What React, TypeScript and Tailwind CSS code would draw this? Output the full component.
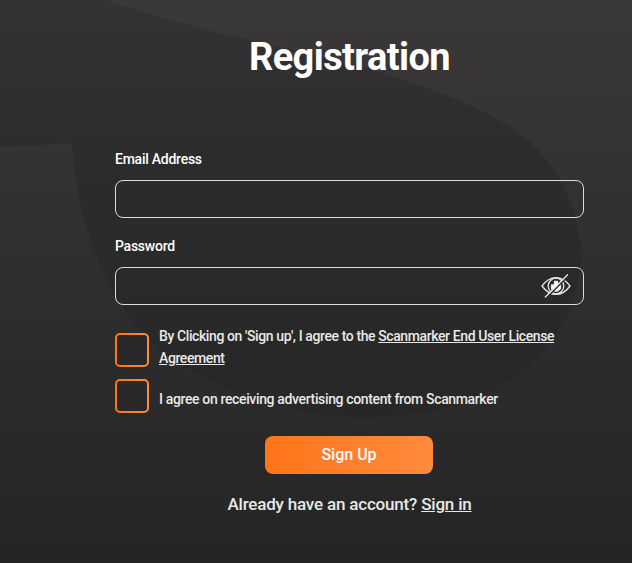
import React, { useState } from 'react';

const Backdrop = () => (
    <svg className="absolute inset-0 w-full h-full" viewBox="0 0 632 563" preserveAspectRatio="none" aria-hidden="true">
        <defs>
            <linearGradient id="blob" x1="0" y1="0" x2="0" y2="1">
                <stop offset="0" stopColor="#343233" />
                <stop offset="0.4" stopColor="#2d2c2d" />
                <stop offset="1" stopColor="#272727" />
            </linearGradient>
        </defs>
        <path
            d="M0 0H107C180 26 250 40 320 56C390 73 466 98 514 129C558 160 581 210 581 255C578 350 500 417 360 417C290 414 230 392 190 369C110 330 76 220 72 143L0 147Z"
            fill="url(#blob)"
        />
    </svg>
);

const EyeOffIcon = () => (
    <svg width="30" height="24" viewBox="0 0 30 24" fill="none" stroke="#e8e8e8" strokeWidth="1.3" strokeLinecap="round">
        <path d="M1 12C5 6.5 10 3.6 15 3.6S25 6.5 29 12C25 17.5 20 20.4 15 20.4S5 17.5 1 12Z" />
        <circle cx="15" cy="12" r="7.8" />
        <path d="M13.5 7.5H16.5V10H19.5V14.5L16.5 17H13L10.5 14.5V11H13.5Z" fill="#ffffff" strokeLinejoin="round" />
        <path d="M6 23.5L28 1" stroke="#2a292a" strokeWidth="1.6" strokeLinecap="butt" />
        <path d="M4.3 23L26.6 0.8" />
    </svg>
);

const Checkbox = ({ checked, onToggle, label }: { checked: boolean, onToggle: () => void, label: string }) => (
    <button
        type="button"
        role="checkbox"
        aria-checked={checked}
        aria-label={label}
        onClick={onToggle}
        className="shrink-0 w-[34px] h-[34px] rounded-[5px] bg-linear-to-r from-[#ff7417] to-[#ff8a3c] p-[2px]"
    >
        <span className={`block w-full h-full rounded-[3px] ${checked ? 'bg-transparent' : 'bg-[#2a292a]'}`} />
    </button>
);

const App = () => {
    const [showPassword, setShowPassword] = useState(false);
    const [terms, setTerms] = useState(false);
    const [ads, setAds] = useState(false);

    return (
        <div className="relative h-[563px] overflow-hidden bg-linear-to-b from-[#3a3839] to-[#252525] font-['Roboto',sans-serif] font-medium text-white">
            <Backdrop />
            <form className="relative ml-[115px] w-[469px] pt-[33px]" onSubmit={e => e.preventDefault()}>
                <h1 className="h-12 leading-[49px] text-center text-[38px] font-bold tracking-[-0.6px] whitespace-nowrap">Registration</h1>

                {/* Credentials */}
                <label htmlFor="email" className="block mt-[68px] h-5 leading-5 text-sm tracking-[-0.25px]">Email Address</label>
                <input id="email" type="email" className="block mt-[11px] w-full h-[38px] px-3 rounded-lg border border-[#d8dde0] outline-none" />

                <label htmlFor="password" className="block mt-[18px] h-5 leading-5 text-sm tracking-[-0.25px]">Password</label>
                <div className="flex items-center mt-[11px] w-full h-[38px] pl-3 pr-[12px] rounded-lg border border-[#d8dde0]">
                    <input id="password" type={showPassword ? 'text' : 'password'} className="grow min-w-0 outline-none" />
                    <button type="button" aria-label="Toggle password" onClick={() => setShowPassword(!showPassword)}>
                        <EyeOffIcon />
                    </button>
                </div>

                {/* Agreements */}
                <div className="flex items-start gap-[10px] mt-[20px] h-[48px] text-sm leading-[22px] text-[#e8e8e8]">
                    <div className="pt-[8px]">
                        <Checkbox checked={terms} onToggle={() => setTerms(!terms)} label="Terms" />
                    </div>
                    <p className="whitespace-nowrap tracking-[-0.4px]">
                        By Clicking on 'Sign up', I agree to the <a href="#" className="underline">Scanmarker End User License</a>
                        <br />
                        <a href="#" className="underline">Agreement</a>
                    </p>
                </div>
                <div className="flex items-center gap-[10px] mt-[6px] text-sm leading-[22px] text-[#e8e8e8]">
                    <Checkbox checked={ads} onToggle={() => setAds(!ads)} label="Advertising" />
                    <p className="pt-[6px] whitespace-nowrap tracking-[-0.36px]">I agree on receiving advertising content from Scanmarker</p>
                </div>

                <button type="submit" className="block ml-[150px] mt-[23px] w-[168px] h-[38px] rounded-lg bg-linear-to-r from-[#ff7417] to-[#ff8a3c] text-base">
                    Sign Up
                </button>
                <p className="mt-[18px] text-center text-[17px] leading-6 tracking-[-0.19px] text-[#e8e8e8] whitespace-nowrap">
                    Already have an account? <a href="#" className="underline">Sign in</a>
                </p>
            </form>
        </div>
    );
};

export default App;
